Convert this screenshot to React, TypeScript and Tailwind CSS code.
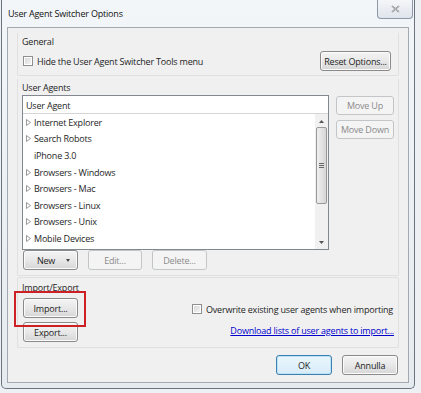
import React from "react";

const font = { fontFamily: '"Open Sans", "Noto Sans", Arial, sans-serif' };

function Btn({ children, disabled, primary, className = "" }: { children: React.ReactNode; disabled?: boolean; primary?: boolean; className?: string }) {
  const base = "flex items-center justify-center rounded-[3px] border text-[9px] leading-none";
  const look = disabled
    ? "border-[#c3c6c9] bg-[#f4f4f4] text-[#8a8a8a]"
    : primary
    ? "border-[#3c7fb1] bg-gradient-to-b from-[#eaf6fd] to-[#d7ecf8] text-[#1e1e1e] shadow-[inset_0_0_0_1px_#bde3f7]"
    : "border-[#8a8a8a] bg-gradient-to-b from-[#f4f4f4] via-[#e8e8e8] to-[#d6d6d6] text-[#1e1e1e] shadow-[inset_0_0_0_1px_#fbfbfb]";
  return <div className={`${base} ${look} ${className}`}>{children}</div>;
}

function Check() {
  return (
    <div className="h-[10px] w-[10px] border border-[#8e8f8f] bg-white p-[1px]">
      <div className="h-full w-full bg-gradient-to-br from-[#d8d8d8] to-[#f4f4f4]" />
    </div>
  );
}

function Twisty() {
  return (
    <svg width="5" height="7" viewBox="0 0 5 7" className="mr-[2px]">
      <path d="M0.5 0.5 L4.5 3.5 L0.5 6.5 Z" fill="#fff" stroke="#8c8c8c" strokeWidth="0.9" />
    </svg>
  );
}

const rows = [
  { t: "Internet Explorer", k: true },
  { t: "Search Robots", k: true },
  { t: "iPhone 3.0", k: false },
  { t: "Browsers - Windows", k: true },
  { t: "Browsers - Mac", k: true },
  { t: "Browsers - Linux", k: true },
  { t: "Browsers - Unix", k: true },
  { t: "Mobile Devices", k: true },
];

export default function App() {
  return (
    <div className="relative h-[393px] w-[421px] overflow-hidden bg-[#eef1f4] tracking-[-0.2px] text-[#1e1e1e]" style={font}>
      {/* window */}
      <div className="ml-[1px] flex h-[389px] w-[414px] flex-col rounded-b-[5px] border border-t-0 border-[#6b7380] bg-gradient-to-b from-[#f3f6f9] to-[#e6ebf0]">
        {/* title bar */}
        <div className="flex h-[27px] items-start justify-between">
          <div className="pl-[6px] pt-[8px] text-[9px] leading-[12px] text-[#111]">User Agent Switcher Options</div>
          <div className="mr-[1px] flex h-[19px] w-[36px] items-center justify-center rounded-b-[4px] border border-t-0 border-[#8e98a6] bg-gradient-to-b from-[#f4f6f9] to-[#dfe5ec]">
            <svg width="9" height="8" viewBox="0 0 9 8">
              <path d="M1 1 L8 7 M8 1 L1 7" stroke="#777" strokeWidth="1.6" />
              <path d="M1 1 L8 7 M8 1 L1 7" stroke="#fff" strokeWidth="0.5" />
            </svg>
          </div>
        </div>
        {/* client */}
        <div className="mx-[5px] flex h-[356px] flex-col border border-[#a3a9b1] bg-[#f0f0f0] px-[9px] pt-[4px]">
          {/* General */}
          <div className="flex h-[44px] flex-col rounded-[2px] border border-[#e0e0e0] border-t-transparent px-[4px]">
            <div className="pt-[3px] text-[9px] leading-[12px]">General</div>
            <div className="mt-[3px] flex items-center justify-between pr-[3px]">
              <div className="flex items-center gap-[4px] pl-[1px]">
                <Check />
                <span className="text-[9px] leading-none">Hide the User Agent Switcher Tools menu</span>
              </div>
              <Btn className="h-[20px] w-[71px]">Reset Options...</Btn>
            </div>
          </div>
          {/* User Agents */}
          <div className="mt-[2px] flex h-[198px] flex-col rounded-[2px] border border-[#e0e0e0] border-t-transparent px-[4px]">
            <div className="pt-[3px] text-[9px] leading-[12px]">User Agents</div>
            <div className="mt-[1px] flex gap-[7px]">
              <div className="flex h-[155px] w-[309px] flex-col border border-[#828790] bg-white">
                <div className="flex h-[18px] items-center border-b border-[#d5d5d5] pl-[3px] pt-[2px] text-[9px]">User Agent</div>
                <div className="flex flex-1">
                  <div className="flex flex-1 flex-col">
                    {rows.map((r) => (
                      <div key={r.t} className="flex h-[16.6px] items-center pl-[3px] text-[9px] leading-none">
                        {r.k ? <Twisty /> : <span className="w-[7px]" />}
                        <span className="pl-[1px]">{r.t}</span>
                      </div>
                    ))}
                  </div>
                  <div className="flex w-[13px] flex-col items-center bg-[#f1f1f1]">
                    <svg width="5" height="3" viewBox="0 0 5 3" className="mt-[6px]"><path d="M0 3 L2.5 0 L5 3 Z" fill="#555" /></svg>
                    <div className="mt-[4px] flex h-[77px] w-[11px] items-center justify-center rounded-[2px] border border-[#989898] bg-gradient-to-r from-[#f0f0f0] to-[#d6d6d6]">
                      <div className="flex flex-col gap-[1px]">
                        <div className="h-px w-[5px] bg-[#666]" />
                        <div className="h-px w-[5px] bg-[#666]" />
                        <div className="h-px w-[5px] bg-[#666]" />
                      </div>
                    </div>
                    <div className="flex-1" />
                    <svg width="5" height="3" viewBox="0 0 5 3" className="mb-[5px]"><path d="M0 0 L2.5 3 L5 0 Z" fill="#555" /></svg>
                  </div>
                </div>
              </div>
              <div className="flex flex-col gap-[5px] pt-[1px]">
                <Btn disabled className="h-[19px] w-[58px]">Move Up</Btn>
                <Btn disabled className="h-[19px] w-[58px]">Move Down</Btn>
              </div>
            </div>
            <div className="flex gap-[10px] pl-[1px]">
              <Btn className="h-[20px] w-[55px] gap-[11px] pl-[6px]">
                <span>New</span>
                <svg width="4" height="3" viewBox="0 0 4 3"><path d="M0 0 L2 3 L4 0 Z" fill="#444" /></svg>
              </Btn>
              <Btn disabled className="h-[20px] w-[54px]">Edit...</Btn>
              <Btn disabled className="h-[20px] w-[55px]">Delete...</Btn>
            </div>
          </div>
          {/* Import/Export */}
          <div className="mt-[1px] flex h-[71px] flex-col rounded-[2px] border border-[#e0e0e0] px-[4px]">
            <div className="pt-[4px] text-[9px] leading-[12px]">Import/Export</div>
            <div className="mt-[4px] flex justify-between">
              <div className="flex flex-col gap-[4px] pl-[1px]">
                <Btn className="h-[20px] w-[55px]">Import...</Btn>
                <Btn className="h-[20px] w-[55px]">Export...</Btn>
              </div>
              <div className="flex flex-col items-end">
                <div className="mt-[6px] flex items-center gap-[4px] pr-[1px]">
                  <Check />
                  <span className="text-[9px] leading-none">Overwrite existing user agents when importing</span>
                </div>
                <div className="mt-[12px] text-[9px] leading-none text-[#0000cc] underline">Download lists of user agents to import...</div>
              </div>
            </div>
          </div>
          {/* footer */}
          <div className="mt-[7px] flex justify-end gap-[10px] pr-[1px]">
            <Btn primary className="h-[20px] w-[56px]">OK</Btn>
            <Btn className="h-[20px] w-[56px]">Annulla</Btn>
          </div>
        </div>
      </div>
      {/* highlight */}
      <div className="absolute left-[14px] top-[291px] h-[36px] w-[72px] border-2 border-[#cc1f26]" />
    </div>
  );
}
